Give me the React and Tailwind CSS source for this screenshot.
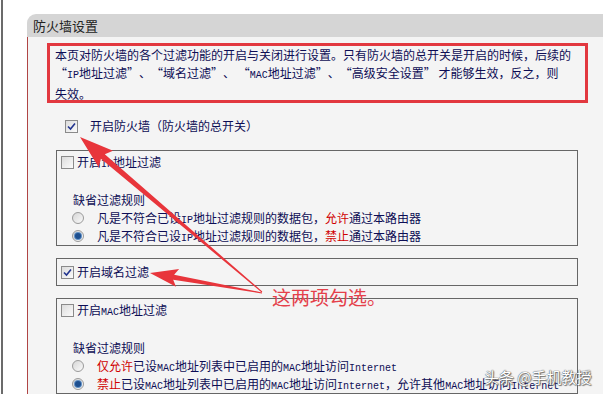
import React from "react";

const L = ({ children }) => (
  <span className="font-['Liberation_Mono',monospace] text-[10px]">{children}</span>
);

const QO = () => <span className="inline-block w-[12px] text-right">“</span>;
const QC = () => <span className="inline-block w-[12px] text-left">”</span>;

const R = ({ children }) => <span className="text-[#d00000]">{children}</span>;

function CheckBox({ checked }) {
  return (
    <span className="inline-flex w-[13px] h-[13px] shrink-0 items-center justify-center border border-[#8a8a8a] bg-gradient-to-br from-[#dcdcdc] to-[#fbfbfb]">
      {checked && (
        <svg width="9" height="9" viewBox="0 0 9 9">
          <path d="M1 4.5 L3.5 7 L8 1.5" stroke="#23358f" strokeWidth="1.6" fill="none" />
        </svg>
      )}
    </span>
  );
}

function Radio({ checked }) {
  return (
    <span className="inline-flex w-[12px] h-[12px] shrink-0 rounded-full items-center justify-center border border-[#9a9a9a] bg-gradient-to-br from-[#d6d6d6] to-[#fafafa]">
      {checked && <span className="w-[6px] h-[6px] rounded-full bg-[#1d4f8f] ring-1 ring-[#5f8fc4]" />}
    </span>
  );
}

function arrowPoints(x0, y0, x1, y1, hl, hw, sw, tw) {
  const dx = x1 - x0, dy = y1 - y0;
  const len = Math.sqrt(dx * dx + dy * dy);
  const ux = dx / len, uy = dy / len;
  const nx = -uy, ny = ux;
  const bx = x1 - ux * hl, by = y1 - uy * hl;
  const cx = bx - ux * 4, cy = by - uy * 4;
  const p = [
    [x0 + (nx * tw) / 2, y0 + (ny * tw) / 2],
    [bx + (nx * sw) / 2, by + (ny * sw) / 2],
    [cx + nx * hw, cy + ny * hw],
    [x1, y1],
    [cx - nx * hw, cy - ny * hw],
    [bx - (nx * sw) / 2, by - (ny * sw) / 2],
    [x0 - (nx * tw) / 2, y0 - (ny * tw) / 2],
  ];
  return p.map((q) => q[0].toFixed(1) + "," + q[1].toFixed(1)).join(" ");
}

function FilterBox({ titleNode, checked, rows }) {
  return (
    <div className="ml-[28px] w-[522px] border border-[#666] flex flex-col">
      <div className="h-[22px] flex items-center pl-[4px] gap-[3px]">
        <CheckBox checked={checked} />
        <span>{titleNode}</span>
      </div>
      <div className="h-[18px]" />
      <div className="h-[18px] leading-[18px] pl-[16px]">缺省过滤规则</div>
      {rows.map((r, i) => (
        <div key={i} className="h-[18px] flex items-center pl-[15px]">
          <Radio checked={i === 1} />
          <span className="ml-[13px] whitespace-nowrap">{r}</span>
        </div>
      ))}
    </div>
  );
}

export default function App() {
  return (
    <div className="w-[603px] h-[394px] overflow-hidden bg-white relative flex font-['Noto_Sans_CJK_SC',sans-serif] text-[12px] text-[#0d0d55]" lang="zh-CN">
      <div className="w-[2px] ml-px bg-[#6b6b6b] shrink-0" />
      <div className="ml-[24px] flex-1 flex flex-col pt-[14px]">
        <div className="h-[23px] shrink-0 bg-[#d5d5d5] rounded-tl-[9px] pl-[6px] flex items-center text-[13px] text-[#222]">
          防火墙设置
        </div>
        <div className="flex-1 bg-[#f4f4f4] border-l border-[#b04545] pt-[6px] flex flex-col">
          <div className="ml-[19px] w-[541px] h-[60px] shrink-0 border-[3px] border-[#e2383f] pl-[5px] leading-[18px] whitespace-nowrap">
            <div>本页对防火墙的各个过滤功能的开启与关闭进行设置。只有防火墙的总开关是开启的时候，后续的</div>
            <div>
              <QO /><L>IP</L>地址过滤<QC />、<QO />域名过滤<QC />、 <QO /><L>MAC</L>地址过滤<QC />、<QO />高级安全设置<QC /> 才能够生效，反之，则
            </div>
            <div>失效。</div>
          </div>
          <div className="mt-[10px] h-[26px] shrink-0 flex items-center pl-[37px] gap-[12px]">
            <CheckBox checked />
            <span>开启防火墙（防火墙的总开关）</span>
          </div>
          <div className="mt-[11px]">
            <FilterBox
              checked={false}
              titleNode={<>开启<L>IP</L>地址过滤</>}
              rows={[
                <>凡是不符合已设<L>IP</L>地址过滤规则的数据包，<R>允许</R>通过本路由器</>,
                <>凡是不符合已设<L>IP</L>地址过滤规则的数据包，<R>禁止</R>通过本路由器</>,
              ]}
            />
          </div>
          <div className="mt-[12px] ml-[28px] w-[522px] h-[28px] shrink-0 border border-[#666] flex items-center pl-[4px] gap-[3px]">
            <CheckBox checked />
            <span>开启域名过滤</span>
          </div>
          <div className="mt-[12px]">
            <FilterBox
              checked={false}
              titleNode={<>开启<L>MAC</L>地址过滤</>}
              rows={[
                <><R>仅允许</R>已设<L>MAC</L>地址列表中已启用的<L>MAC</L>地址访问<L>Internet</L></>,
                <><R>禁止</R>已设<L>MAC</L>地址列表中已启用的<L>MAC</L>地址访问<L>Internet</L>，允许其他<L>MAC</L>地址访问<L>Internet</L></>,
              ]}
            />
          </div>
        </div>
      </div>

      <svg className="absolute inset-0 pointer-events-none" width="603" height="394" viewBox="0 0 603 394">
        <polygon points={arrowPoints(262, 292, 80, 137, 30, 11, 6, 1)} fill="#e8353b" />
        <polygon points={arrowPoints(262, 293, 150, 273, 24, 9, 5, 1)} fill="#e8353b" />
      </svg>

      <div className="absolute left-[272px] top-[284px] text-[19px] leading-[26px] text-[#e5404a] whitespace-nowrap">
        这两项勾选。
      </div>

      <div className="absolute left-[484px] top-[366px] text-[15px] leading-[22px] text-white whitespace-nowrap [text-shadow:0_0_1px_#555,0_0_1px_#555,1px_1px_1px_#777]">
        头条 @手机教授
      </div>
    </div>
  );
}
